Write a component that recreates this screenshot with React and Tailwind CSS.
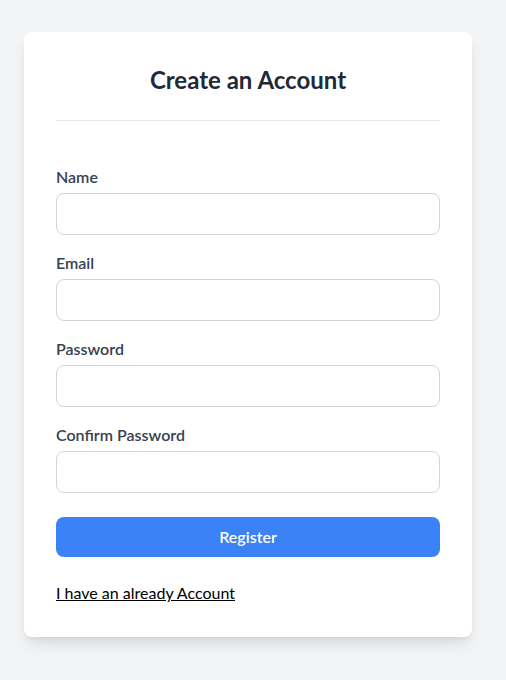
import React, { useState } from 'react';

const fields = [
  { id: 'name', label: 'Name', type: 'text' },
  { id: 'email', label: 'Email', type: 'email' },
  { id: 'password', label: 'Password', type: 'password' },
  { id: 'confirm', label: 'Confirm Password', type: 'password' },
];

const App = () => {
  const [form, setForm] = useState({ name: '', email: '', password: '', confirm: '' });

  const handleChange = (e) => {
    setForm({ ...form, [e.target.name]: e.target.value });
  };

  return (
    <div className="min-h-screen bg-gray-100 flex justify-center pt-8 pb-11 pr-[10px] font-['Lato',sans-serif]">
      <div className="w-[448px] h-fit bg-white rounded-lg shadow-lg p-8">
        <h1 className="text-2xl font-bold text-[#1f2937] text-center pb-6 border-b border-[#e5e7eb]">
          Create an Account
        </h1>
        <form className="mt-11" onSubmit={(e) => e.preventDefault()}>
          {fields.map((f) => (
            <div key={f.id} className="mb-4">
              <label htmlFor={f.id} className="block font-semibold text-[#374151] mb-1">
                {f.label}
              </label>
              <input
                id={f.id}
                name={f.id}
                type={f.type}
                value={form[f.id]}
                onChange={handleChange}
                className="w-full p-2 border border-[#d1d5db] rounded-lg focus:outline-none"
              />
            </div>
          ))}
          <button
            type="submit"
            className="w-full mt-2 py-2 bg-[#3b82f6] text-white font-semibold rounded-lg"
          >
            Register
          </button>
        </form>
        <a href="#" className="block mt-6 text-black underline w-fit">
          I have an already Account
        </a>
      </div>
    </div>
  );
};

export default App;
